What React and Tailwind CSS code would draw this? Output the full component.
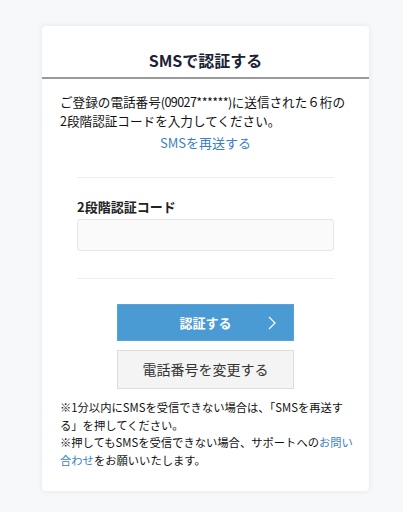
export default function App() {
  return (
    <div
      className="min-h-[512px] bg-[#f7f8fa] pt-[26px] pb-[21px]"
      style={{ fontFamily: '"Noto Sans CJK JP", "Noto Sans", sans-serif' }}
    >
      <div className="ml-[42px] w-[327px] rounded-[4px] bg-white shadow-[0_0_6px_rgba(0,0,0,0.08)]">
        <div className="flex h-[53px] items-end justify-center border-b-2 border-[#9a9a9a] pb-[7px]">
          <h1 className="text-[16px] font-bold leading-[20px] text-[#1a2236]">SMSで認証する</h1>
        </div>
        <div className="px-[18px] pt-[13px] pb-[22px]">
          <p className="whitespace-nowrap text-[12.6px] leading-[19px] text-[#111]">
            ご登録の電話番号<span className="tracking-[-0.6px]">(09027******)</span>に送信された６桁の
            <br />
            2段階認証コードを入力してください。
          </p>
          <p className="mt-[3px] text-center text-[13px] leading-[19px] text-[#3a80c4]">SMSを再送する</p>
          <div className="mx-[17px] mt-[25px] border-t border-[#eeeeee]" />
          <div className="mx-[17px] pt-[20px]">
            <label className="block text-[13px] font-bold leading-[18px] text-[#222]">2段階認証コード</label>
            <div className="mt-[3px] h-[32px] rounded-[3px] border border-[#e6e6e6] bg-[#fafafa]" />
          </div>
          <div className="mx-[17px] mt-[27px] border-t border-[#eeeeee]" />
          <div className="mt-[25px] flex flex-col items-center gap-[9px]">
            <button className="relative flex h-[37px] w-[177px] items-center justify-center border border-[#5aa3dc] bg-[#4a9ad4] text-[13px] font-bold text-white">
              認証する
              <svg
                className="absolute right-[17px] top-1/2 -translate-y-1/2"
                width="8"
                height="14"
                viewBox="0 0 8 14"
                fill="none"
                stroke="white"
                strokeWidth="1.2"
              >
                <path d="M1 1l6 6-6 6" />
              </svg>
            </button>
            <button className="flex h-[39px] w-[177px] items-center justify-center border border-[#dddddd] bg-[#f4f4f4] text-[14px] text-[#333]">
              電話番号を変更する
            </button>
          </div>
          <div className="mt-[10px] whitespace-nowrap text-[11.3px] leading-[17.6px] text-[#111]">
            <p>
              ※1分以内にSMSを受信できない場合は、「SMSを再送す
              <br />
              る」を押してください。
            </p>
            <p>
              ※押してもSMSを受信できない場合、サポートへの
              <span className="text-[#3a80c4]">
                お問い
                <br />
                合わせ
              </span>
              をお願いいたします。
            </p>
          </div>
        </div>
      </div>
    </div>
  );
}
